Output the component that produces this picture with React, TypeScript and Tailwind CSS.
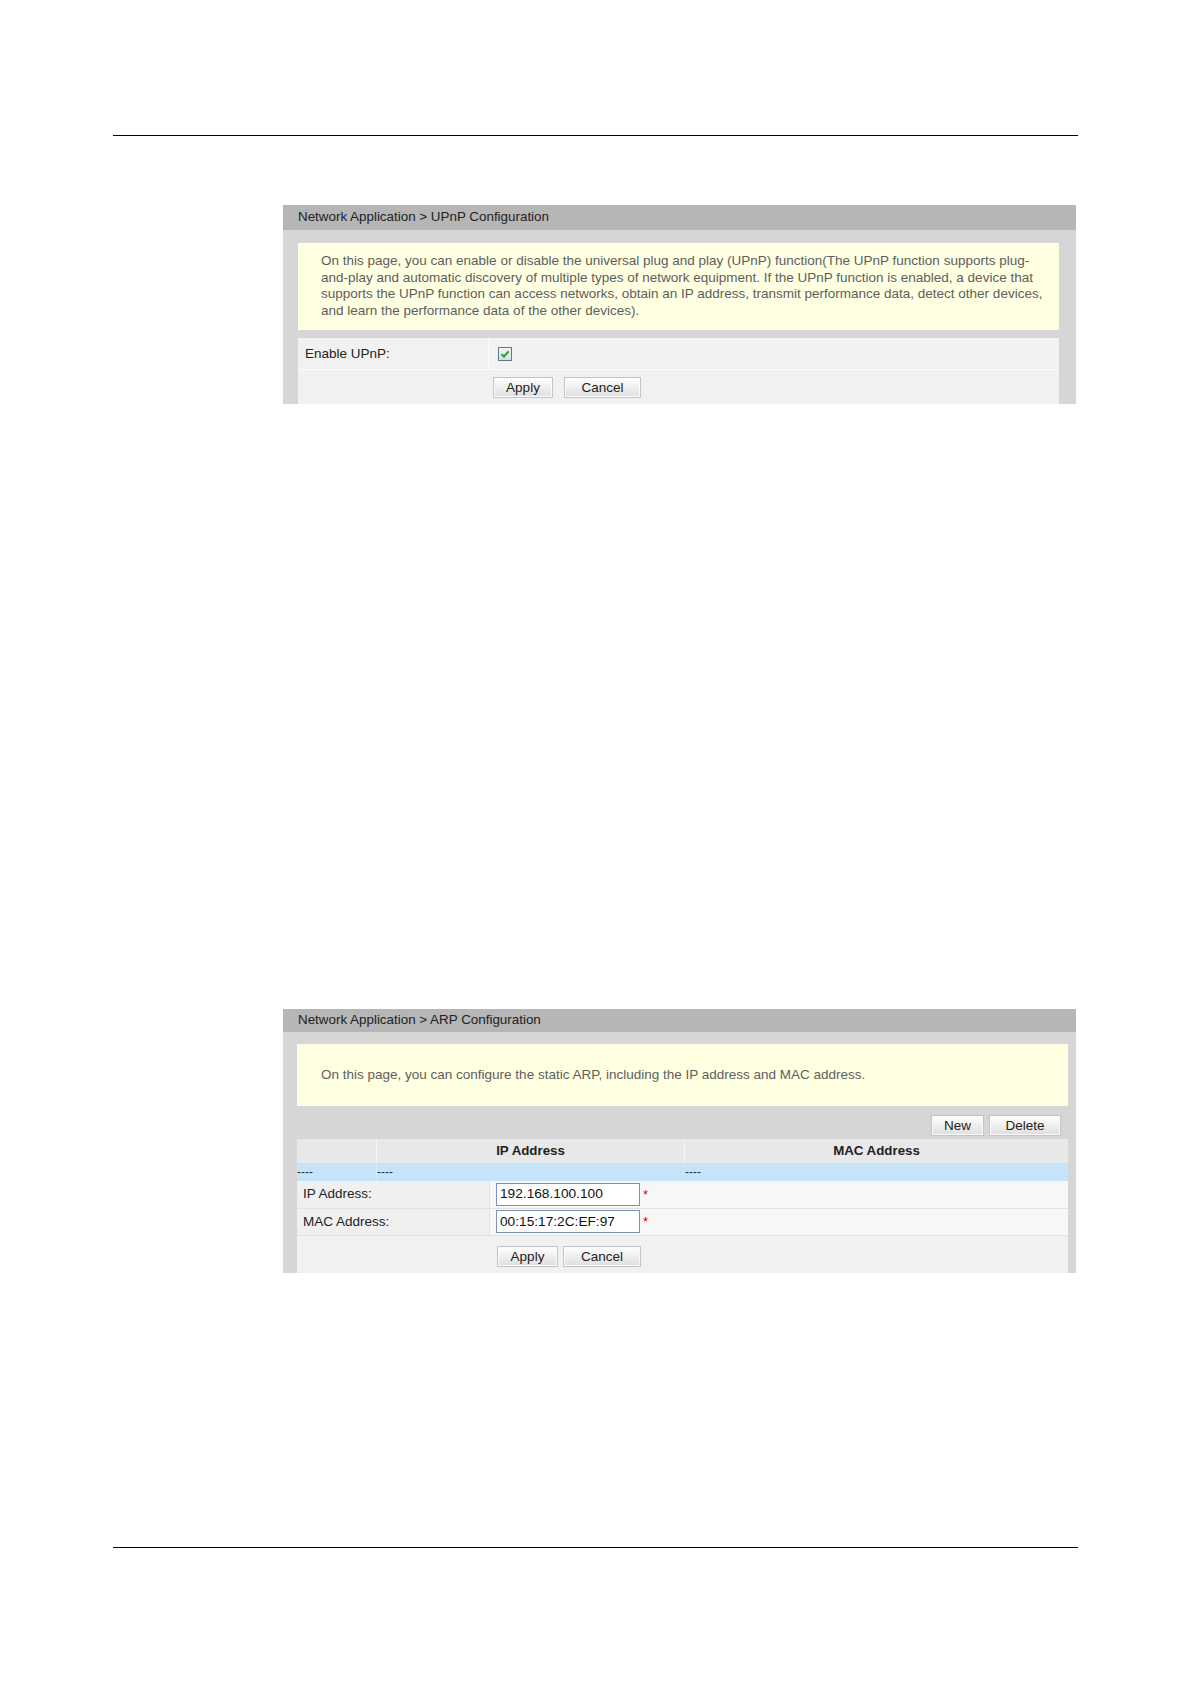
import React from "react";

const font = { fontFamily: '"Liberation Sans", Arial, sans-serif' };

function Btn({ label, w }: { label: string; w: string }) {
  return (
    <button
      className={`h-[21px] ${w} border border-[#c4c4c4] bg-gradient-to-b from-[#ffffff] to-[#dedede] text-[13.5px] leading-none text-[#222] shadow-[inset_0_0_0_1px_#fafafa]`}
    >
      {label}
    </button>
  );
}

function PanelHeader({ title, h }: { title: string; h: string }) {
  return (
    <div className={`${h} bg-[#b6b6b6] pl-[15px] flex items-center text-[13.4px] text-[#222]`}>
      {title}
    </div>
  );
}

function TextInput({ value }: { value: string }) {
  return (
    <div className="flex items-center">
      <div className="w-[144px] h-[23px] border border-[#7d94b0] bg-white px-[3px] flex items-center text-[13.7px] text-[#111]">
        {value}
      </div>
      <span className="ml-[3px] text-[13px] text-[#e00000] leading-none">*</span>
    </div>
  );
}

function UpnpPanel() {
  return (
    <section className="ml-[170px] w-[793px] mt-[69px]">
      <PanelHeader title="Network Application > UPnP Configuration" h="h-[25px]" />
      <div className="bg-[#d6d6d6] pl-[15px] pr-[17px] pt-[13px]">
        <div className="bg-[#ffffe2] pl-[23px] pr-[10px] pt-[10px] pb-[10px] text-[13.5px] leading-[16.7px] text-[#5e5e5e] whitespace-nowrap">
          <div>On this page, you can enable or disable the universal plug and play (UPnP) function(The UPnP function supports plug-</div>
          <div>and-play and automatic discovery of multiple types of network equipment. If the UPnP function is enabled, a device that</div>
          <div>supports the UPnP function can access networks, obtain an IP address, transmit performance data, detect other devices,</div>
          <div>and learn the performance data of the other devices).</div>
        </div>
        <div className="mt-[8px] flex h-[32px] bg-[#f1f1f1] border-b border-[#fbfbfb]">
          <div className="w-[191px] pl-[7px] pt-[2px] flex items-center text-[13.5px] text-[#222] border-r border-[#fafafa]">
            Enable UPnP:
          </div>
          <div className="flex-1 pl-[9px] pt-[2px] flex items-center bg-[#f2f2f2]">
            <div className="w-[14px] h-[14px] border border-[#5a7a9a] bg-gradient-to-b from-[#f4f4f4] to-[#dcdcdc] flex items-center justify-center">
              <svg width="10" height="10" viewBox="0 0 10 10">
                <path d="M1.5 5.2 L4 7.6 L8.6 2.4" fill="none" stroke="#22a02a" strokeWidth="2" />
              </svg>
            </div>
          </div>
        </div>
        <div className="h-[34px] bg-[#f1f1f1] flex items-start pt-[7px] pl-[195px] gap-[11px]">
          <Btn label="Apply" w="w-[60px]" />
          <Btn label="Cancel" w="w-[77px]" />
        </div>
      </div>
    </section>
  );
}

function ArpPanel() {
  return (
    <section className="ml-[170px] w-[793px] mt-[605px]">
      <PanelHeader title="Network Application > ARP Configuration" h="h-[23px]" />
      <div className="bg-[#d6d6d6] pl-[14px] pr-[8px] pt-[12px]">
        <div className="bg-[#ffffe2] h-[62px] pl-[24px] flex items-center text-[13.5px] text-[#5e5e5e]">
          On this page, you can configure the static ARP, including the IP address and MAC address.
        </div>
        <div className="flex justify-end gap-[5px] pt-[9px] pb-[3px] pr-[7px]">
          <Btn label="New" w="w-[53px]" />
          <Btn label="Delete" w="w-[72px]" />
        </div>
        <div className="flex h-[24px] bg-[#e8e8e8] text-[13.3px] font-bold text-[#222]">
          <div className="w-[80px] border-r border-[#f4f4f4]" />
          <div className="w-[308px] border-r border-[#f4f4f4] flex items-center justify-center">IP Address</div>
          <div className="flex-1 flex items-center justify-center">MAC Address</div>
        </div>
        <div className="flex h-[18px] bg-[#c6e4f9] text-[12px] text-[#333] leading-none">
          <div className="w-[80px] flex items-center border-r border-[#d4ebfb]">----</div>
          <div className="w-[308px] flex items-center">----</div>
          <div className="flex-1 flex items-center">----</div>
        </div>
        <div className="flex h-[28px] bg-[#f7f7f7] border-b border-[#e2e2e2]">
          <div className="w-[193px] pl-[6px] flex items-center text-[13.5px] text-[#222] bg-[#f0f0f0] border-r border-[#e2e2e2]">
            IP Address:
          </div>
          <div className="flex-1 pl-[6px] flex items-center">
            <TextInput value="192.168.100.100" />
          </div>
        </div>
        <div className="flex h-[27px] bg-[#f7f7f7] border-b border-[#e2e2e2]">
          <div className="w-[193px] pl-[6px] flex items-center text-[13.5px] text-[#222] bg-[#f0f0f0] border-r border-[#e2e2e2]">
            MAC Address:
          </div>
          <div className="flex-1 pl-[6px] flex items-center">
            <TextInput value="00:15:17:2C:EF:97" />
          </div>
        </div>
        <div className="h-[37px] bg-[#f1f1f1] flex items-start pt-[10px] pl-[200px] gap-[5px]">
          <Btn label="Apply" w="w-[61px]" />
          <Btn label="Cancel" w="w-[78px]" />
        </div>
      </div>
    </section>
  );
}

export default function App() {
  return (
    <div className="w-[1191px] h-[1684px] bg-white overflow-hidden" style={font}>
      <div className="pt-[135px] px-[113px]">
        <div className="border-t-[1.5px] border-black" />
      </div>
      <div className="pl-[113px]">
        <UpnpPanel />
        <ArpPanel />
      </div>
      <div className="pt-[274px] px-[113px]">
        <div className="border-t-[1.5px] border-black" />
      </div>
    </div>
  );
}
